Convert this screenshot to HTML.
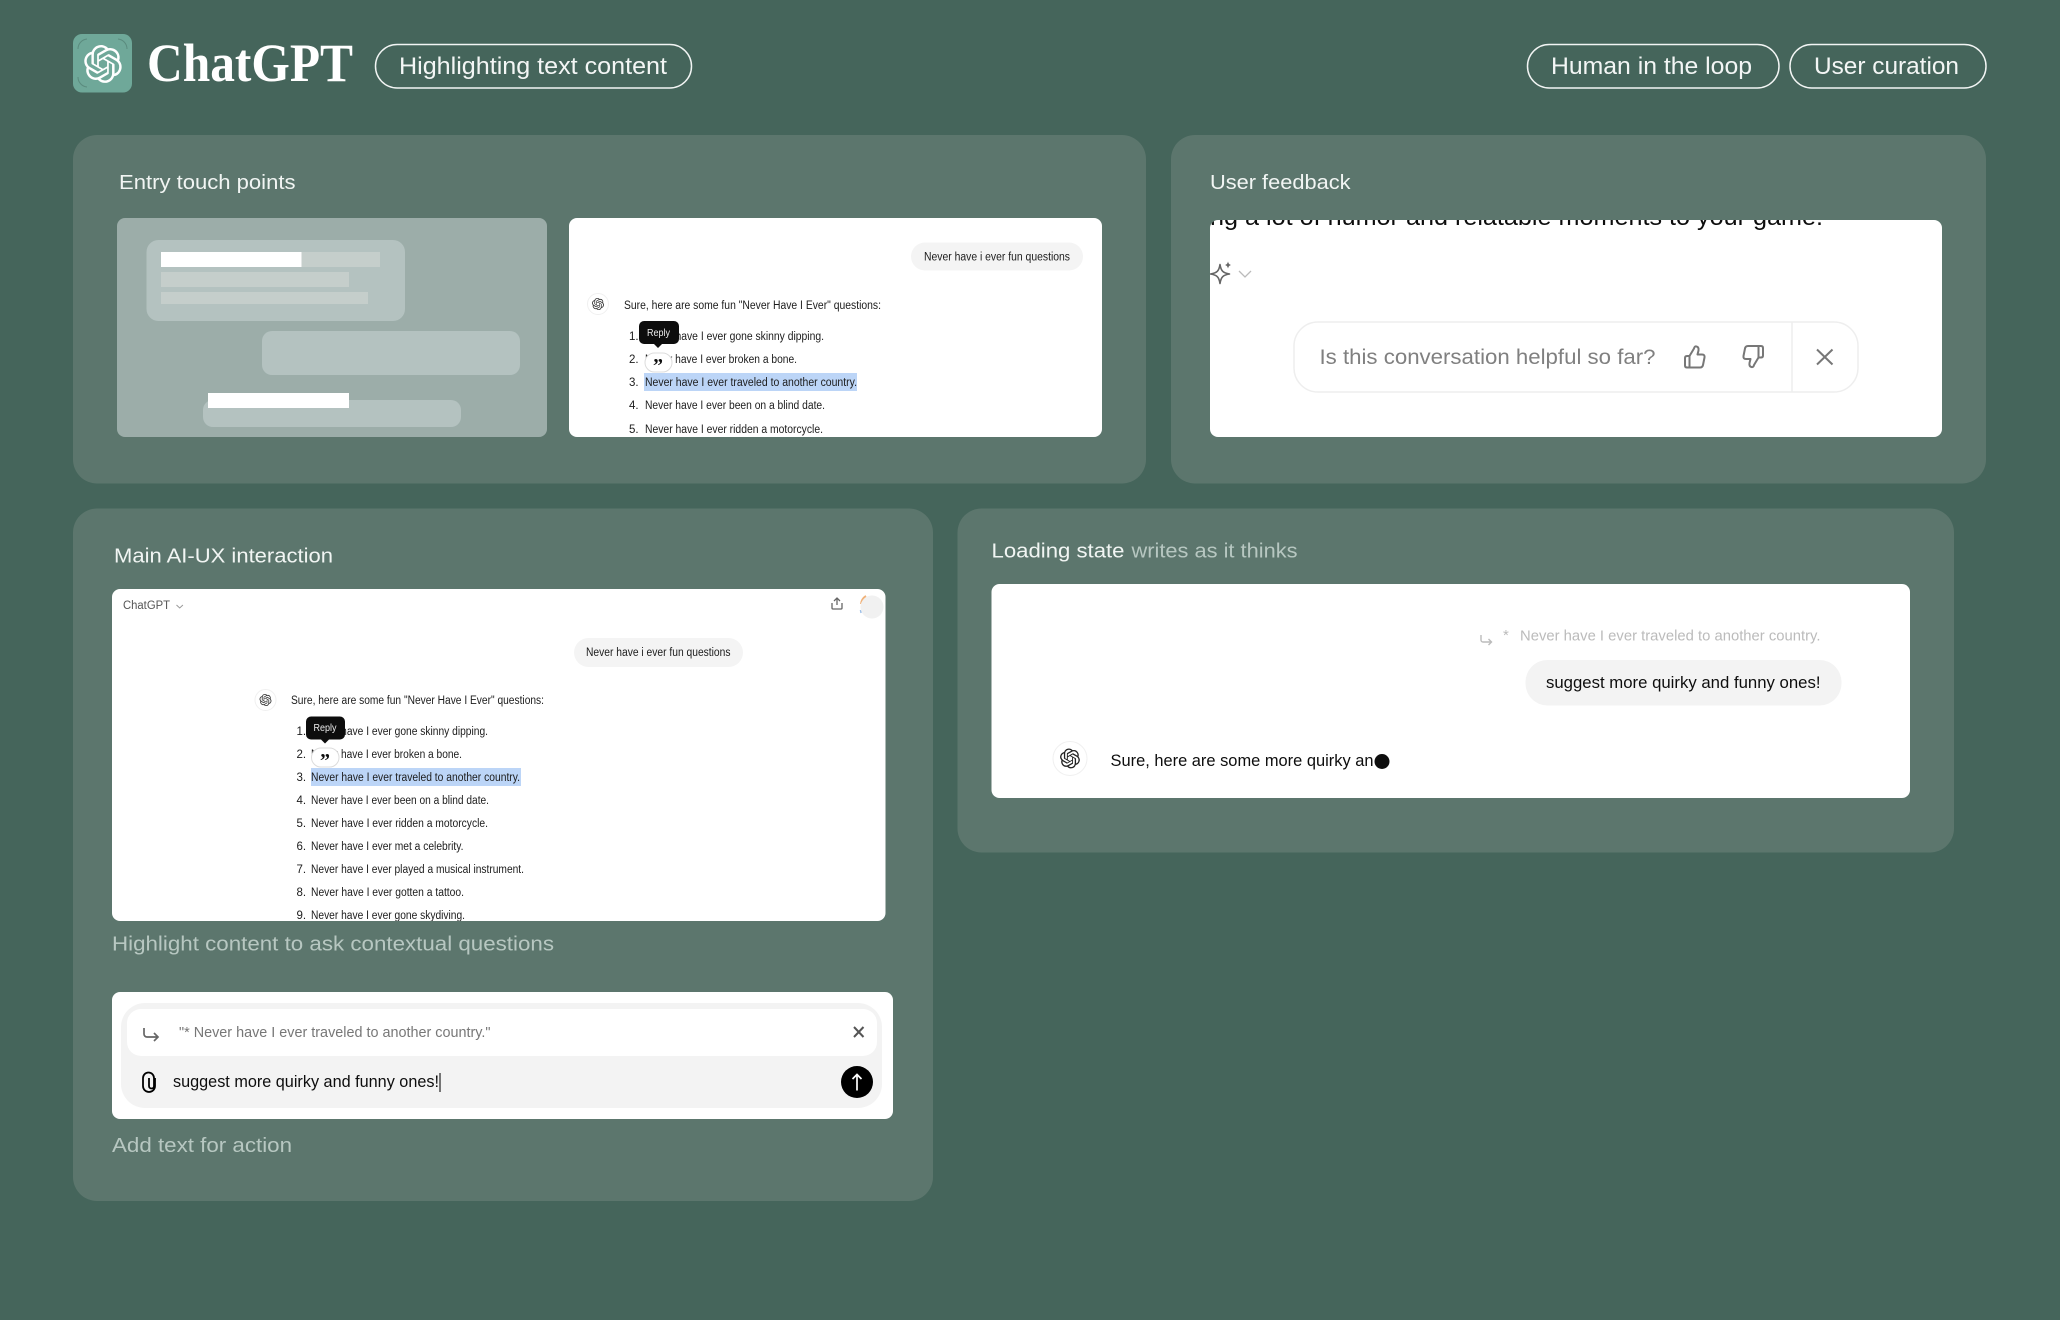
<!DOCTYPE html>
<html lang="en">
<head>
<meta charset="utf-8">
<title>ChatGPT - Highlighting text content</title>
<style>
html,body{margin:0;padding:0;background:#45655b;width:2060px;height:1320px;overflow:hidden}
svg{display:block;font-family:"Liberation Sans",sans-serif}
.t{fill:#f1f5f3;font-size:20px}
.c{fill:#b7c7c1;font-size:20px}
.p{fill:#f3f6f5;font-size:24px}
.s{fill:#1c1c1c;font-size:11.5px}
.m{fill:#1c1c1c;font-size:11.5px}
</style>
</head>
<body>
<svg width="2060" height="1320" viewBox="0 0 2060 1320" xmlns="http://www.w3.org/2000/svg">
<defs>
<filter id="b" x="-5%" y="-5%" width="110%" height="110%"><feGaussianBlur stdDeviation="0.35"/></filter>
<clipPath id="c1"><rect x="569" y="218" width="533" height="219" rx="8"/></clipPath>
<clipPath id="c2"><rect x="1210" y="220" width="732" height="217" rx="8"/></clipPath>
<clipPath id="c3"><rect x="112" y="589" width="773.5" height="332" rx="8"/></clipPath>
<path id="oai" d="M22.2819 9.8211a5.9847 5.9847 0 0 0-.5157-4.9108 6.0462 6.0462 0 0 0-6.5098-2.9A6.0651 6.0651 0 0 0 4.9807 4.1818a5.9847 5.9847 0 0 0-3.9977 2.9 6.0462 6.0462 0 0 0 .7427 7.0966 5.98 5.98 0 0 0 .511 4.9107 6.051 6.051 0 0 0 6.5146 2.9001A5.9847 5.9847 0 0 0 13.2599 24a6.0557 6.0557 0 0 0 5.7718-4.2058 5.9894 5.9894 0 0 0 3.9977-2.9001 6.0557 6.0557 0 0 0-.7475-7.0729zm-9.022 12.6081a4.4755 4.4755 0 0 1-2.8764-1.0408l.1419-.0804 4.7783-2.7582a.7948.7948 0 0 0 .3927-.6813v-6.7369l2.02 1.1686a.071.071 0 0 1 .038.052v5.5826a4.504 4.504 0 0 1-4.4945 4.4944zm-9.6607-4.1254a4.4708 4.4708 0 0 1-.5346-3.0137l.142.0852 4.783 2.7582a.7712.7712 0 0 0 .7806 0l5.8428-3.3685v2.3324a.0804.0804 0 0 1-.0332.0615L9.74 19.9502a4.4992 4.4992 0 0 1-6.1408-1.6464zM2.3408 7.8956a4.485 4.485 0 0 1 2.3655-1.9728V11.6a.7664.7664 0 0 0 .3879.6765l5.8144 3.3543-2.0201 1.1685a.0757.0757 0 0 1-.071 0l-4.8303-2.7865A4.504 4.504 0 0 1 2.3408 7.872zm16.5963 3.8558L13.1038 8.364 15.1192 7.2a.0757.0757 0 0 1 .071 0l4.8303 2.7913a4.4944 4.4944 0 0 1-.6765 8.1042v-5.6772a.79.79 0 0 0-.407-.667zm2.0107-3.0231l-.142-.0852-4.7735-2.7818a.7759.7759 0 0 0-.7854 0L9.409 9.2297V6.8974a.0662.0662 0 0 1 .0284-.0615l4.8303-2.7866a4.4992 4.4992 0 0 1 6.6802 4.66zM8.3065 12.863l-2.02-1.1638a.0804.0804 0 0 1-.038-.0567V6.0742a4.4992 4.4992 0 0 1 7.3757-3.4537l-.142.0805L8.704 5.459a.7948.7948 0 0 0-.3927.6813zm1.0976-2.3654l2.602-1.4998 2.6069 1.4998v2.9994l-2.5974 1.4997-2.6067-1.4997Z"/>
</defs>

<rect width="2060" height="1320" fill="#45655b"/>

<!-- header -->
<rect x="73" y="34" width="59" height="58.500" rx="9" fill="#6fa899"/>
<g fill="none" stroke="#5b8b7e" stroke-width="1">
<path d="M78 49a10 10 0 0 1 9-10"/><path d="M118 39a10 10 0 0 1 9 10"/><path d="M78 77a10 10 0 0 0 9 10"/>
</g>
<use href="#oai" transform="translate(84 45) scale(1.58)" fill="#fff"/>
<text x="147" y="81" font-family="'Liberation Serif',serif" font-weight="700" font-size="54" fill="#fff" textLength="206" lengthAdjust="spacingAndGlyphs">ChatGPT</text>

<g fill="none" stroke="#f2f5f4" stroke-width="1.500">
<rect x="375.500" y="44.500" width="316" height="43.500" rx="21.700"/>
<rect x="1527.500" y="44.500" width="251.500" height="43.500" rx="21.700"/>
<rect x="1790" y="44.500" width="196" height="43.500" rx="21.700"/>
</g>
<text class="p" x="399" y="74" textLength="268" lengthAdjust="spacingAndGlyphs">Highlighting text content</text>
<text class="p" x="1551" y="74" textLength="201" lengthAdjust="spacingAndGlyphs">Human in the loop</text>
<text class="p" x="1814" y="74" textLength="145" lengthAdjust="spacingAndGlyphs">User curation</text>

<!-- panels -->
<g fill="#5c766d">
<rect x="73" y="135" width="1073" height="348.500" rx="24"/>
<rect x="1171" y="135" width="815" height="348.500" rx="24"/>
<rect x="73" y="508.500" width="860" height="692.500" rx="24"/>
<rect x="957.500" y="508.500" width="996.500" height="344" rx="24"/>
</g>

<text class="t" x="119" y="189" textLength="176.500" lengthAdjust="spacingAndGlyphs">Entry touch points</text>
<text class="t" x="1210" y="189" textLength="140.500" lengthAdjust="spacingAndGlyphs">User feedback</text>
<text class="t" x="114" y="562.500" textLength="219" lengthAdjust="spacingAndGlyphs">Main AI-UX interaction</text>
<text class="t" x="991.500" y="557.500" textLength="133" lengthAdjust="spacingAndGlyphs">Loading state</text>
<text class="c" x="1131.500" y="557.500" textLength="166" lengthAdjust="spacingAndGlyphs">writes as it thinks</text>
<text class="c" x="112" y="950.500" font-size="21" textLength="442" lengthAdjust="spacingAndGlyphs">Highlight content to ask contextual questions</text>
<text class="c" x="112" y="1152" font-size="21" textLength="180" lengthAdjust="spacingAndGlyphs">Add text for action</text>

<!-- wireframe -->
<rect x="117" y="218" width="430" height="219" rx="8" fill="#9cada9"/>
<rect x="146.500" y="240" width="258.500" height="81" rx="12" fill="#b4c2c0"/>
<rect x="161" y="252" width="219" height="15" fill="#c5cecb"/>
<rect x="161" y="252" width="140.500" height="15" fill="#fff"/>
<rect x="161" y="272" width="188" height="15" fill="#c5cecb"/>
<rect x="161" y="292" width="207" height="12" fill="#c5cecb"/>
<rect x="262" y="331" width="258" height="44" rx="10" fill="#b4c2c0"/>
<rect x="203" y="400" width="258" height="27" rx="10" fill="#b4c2c0"/>
<rect x="208" y="393" width="141" height="15" fill="#fff"/>

<!-- screen 1 -->
<g clip-path="url(#c1)">
<rect x="569" y="218" width="533" height="219" fill="#fff"/>
<g filter="url(#b)">
<rect x="911" y="242.500" width="172" height="28" rx="14" fill="#f4f4f4"/>
<text class="m" x="924" y="260.500" textLength="146" lengthAdjust="spacingAndGlyphs">Never have i ever fun questions</text>
<circle cx="598" cy="304" r="10.500" fill="#fff" stroke="#f0f0f0"/>
<use href="#oai" transform="translate(592 298) scale(.5)" fill="#333"/>
<text class="s" x="624" y="309" textLength="257" lengthAdjust="spacingAndGlyphs">Sure, here are some fun "Never Have I Ever" questions:</text>
<text class="s" x="629" y="340">1.</text>
<text class="s" x="645" y="340" textLength="179" lengthAdjust="spacingAndGlyphs">Never have I ever gone skinny dipping.</text>
<text class="s" x="629" y="363">2.</text>
<text class="s" x="645" y="363" textLength="152" lengthAdjust="spacingAndGlyphs">Never have I ever broken a bone.</text>
<text class="s" x="629" y="386">3.</text>
<rect x="644" y="373" width="213" height="18" fill="#bcd5f7"/>
<text class="s" x="645" y="386" textLength="212" lengthAdjust="spacingAndGlyphs">Never have I ever traveled to another country.</text>
<text class="s" x="629" y="409">4.</text>
<text class="s" x="645" y="409" textLength="180" lengthAdjust="spacingAndGlyphs">Never have I ever been on a blind date.</text>
<text class="s" x="629" y="433">5.</text>
<text class="s" x="645" y="433" textLength="178" lengthAdjust="spacingAndGlyphs">Never have I ever ridden a motorcycle.</text>
<rect x="645" y="353" width="27" height="19" rx="9.500" fill="#fff" stroke="#dcdcdc"/>
<text x="653" y="372" font-family="'Liberation Serif',serif" font-weight="700" font-size="20" fill="#111">”</text>
<rect x="639" y="321" width="40" height="23" rx="5" fill="#0a0a0a"/>
<path d="M654 344h8l-4 4z" fill="#0a0a0a"/>
<text x="647" y="336" font-size="10" fill="#eee" textLength="23" lengthAdjust="spacingAndGlyphs">Reply</text>
</g>
</g>

<!-- screen 2 -->
<g clip-path="url(#c2)">
<rect x="1210" y="220" width="732" height="217" fill="#fff"/>
<g filter="url(#b)">
<text x="1210" y="225" font-size="24" fill="#111" textLength="613" lengthAdjust="spacingAndGlyphs">ng a lot of humor and relatable moments to your game.</text>
<path d="M1220 264.500C1221 271 1223 273 1229.500 274C1223 275 1221 277 1220 283.500C1219 277 1217 275 1210.500 274C1217 273 1219 271 1220 264.500Z" fill="none" stroke="#666" stroke-width="1.600" stroke-linejoin="round"/>
<path d="M1228 261.500q.6 2.900 3 3.500q-2.400.6-3 3.500q-.6-2.900-3-3.500q2.400-.6 3-3.500z" fill="#666"/>
<path d="M1239 271l6 6l6-6" fill="none" stroke="#bbb" stroke-width="1.300"/>
<rect x="1294" y="322" width="564" height="70" rx="24" fill="#fff" stroke="#eee" stroke-width="1.500"/>
<path d="M1792 322v70" stroke="#eee" stroke-width="1.500"/>
<text x="1319.500" y="364" font-size="21.500" fill="#808080" textLength="336" lengthAdjust="spacingAndGlyphs">Is this conversation helpful so far?</text>
<g transform="translate(1684 345.500)" fill="none" stroke="#777" stroke-width="2" stroke-linejoin="round">
<path d="M5.500 10.500L10 3Q10.500 .5 12.500 1Q15 1.500 14.500 5L13.500 9H18Q21 9 20.500 12L19 19.500Q18.500 22 16 22H3Q1 22 1 20V12.500Q1 10.500 3 10.500H5.500V22"/>
</g>
<g transform="translate(1764 368) rotate(180)" fill="none" stroke="#777" stroke-width="2" stroke-linejoin="round">
<path d="M5.500 10.500L10 3Q10.500 .5 12.500 1Q15 1.500 14.500 5L13.500 9H18Q21 9 20.500 12L19 19.500Q18.500 22 16 22H3Q1 22 1 20V12.500Q1 10.500 3 10.500H5.500V22"/>
</g>
<path d="M1817 349.500l15.500 15M1832.500 349.500l-15.500 15" stroke="#777" stroke-width="2" fill="none"/>
</g>
</g>

<!-- screen 3 -->
<g clip-path="url(#c3)">
<rect x="112" y="589" width="773.500" height="332" fill="#fff"/>
<g filter="url(#b)">
<text x="123" y="609" font-size="11.500" fill="#555" textLength="47" lengthAdjust="spacingAndGlyphs">ChatGPT</text>
<path d="M176.500 605l3.200 3l3.200-3" fill="none" stroke="#999" stroke-width="1"/>
<path d="M837 605V598.500M834 601l3-3l3 3M832 603v5a1 1 0 0 0 1 1h8a1 1 0 0 0 1-1v-5" fill="none" stroke="#666" stroke-width="1.300"/>
<path d="M861 604a11 11 0 0 1 5-8" fill="none" stroke="#f0b27a" stroke-width="2"/>
<path d="M860.500 610l.500 3" fill="none" stroke="#9ec0e8" stroke-width="1.500"/>
<circle cx="872" cy="607" r="11.500" fill="#f1f1f1"/>
<rect x="574" y="638" width="169" height="29" rx="14.500" fill="#f4f4f4"/>
<text class="m" x="586" y="656" textLength="144.500" lengthAdjust="spacingAndGlyphs">Never have i ever fun questions</text>
<circle cx="265.500" cy="700" r="10.500" fill="#fff" stroke="#f0f0f0"/>
<use href="#oai" transform="translate(259.500 694) scale(.5)" fill="#333"/>
<text class="s" x="291" y="704" textLength="253" lengthAdjust="spacingAndGlyphs">Sure, here are some fun "Never Have I Ever" questions:</text>
<text class="s" x="296.500" y="735">1.</text>
<text class="s" x="311" y="735" textLength="177" lengthAdjust="spacingAndGlyphs">Never have I ever gone skinny dipping.</text>
<text class="s" x="296.500" y="758">2.</text>
<text class="s" x="311" y="758" textLength="151" lengthAdjust="spacingAndGlyphs">Never have I ever broken a bone.</text>
<text class="s" x="296.500" y="781">3.</text>
<rect x="311" y="768" width="210" height="18" fill="#bcd5f7"/>
<text class="s" x="311" y="781" textLength="209" lengthAdjust="spacingAndGlyphs">Never have I ever traveled to another country.</text>
<text class="s" x="296.500" y="804">4.</text>
<text class="s" x="311" y="804" textLength="178" lengthAdjust="spacingAndGlyphs">Never have I ever been on a blind date.</text>
<text class="s" x="296.500" y="827">5.</text>
<text class="s" x="311" y="827" textLength="177" lengthAdjust="spacingAndGlyphs">Never have I ever ridden a motorcycle.</text>
<text class="s" x="296.500" y="850">6.</text>
<text class="s" x="311" y="850" textLength="152.500" lengthAdjust="spacingAndGlyphs">Never have I ever met a celebrity.</text>
<text class="s" x="296.500" y="873">7.</text>
<text class="s" x="311" y="873" textLength="213" lengthAdjust="spacingAndGlyphs">Never have I ever played a musical instrument.</text>
<text class="s" x="296.500" y="896">8.</text>
<text class="s" x="311" y="896" textLength="153" lengthAdjust="spacingAndGlyphs">Never have I ever gotten a tattoo.</text>
<text class="s" x="296.500" y="919">9.</text>
<text class="s" x="311" y="919" textLength="154" lengthAdjust="spacingAndGlyphs">Never have I ever gone skydiving.</text>
<rect x="311.500" y="748" width="27.500" height="19" rx="9.500" fill="#fff" stroke="#dcdcdc"/>
<text x="320" y="767" font-family="'Liberation Serif',serif" font-weight="700" font-size="20" fill="#111">”</text>
<rect x="306" y="716.500" width="39" height="23" rx="5" fill="#0a0a0a"/>
<path d="M321 739.500h8l-4 4z" fill="#0a0a0a"/>
<text x="313.500" y="731" font-size="10" fill="#eee" textLength="23" lengthAdjust="spacingAndGlyphs">Reply</text>
</g>
</g>

<!-- input -->
<rect x="112" y="992" width="781" height="127" rx="8" fill="#fff"/>
<g filter="url(#b)">
<rect x="121" y="1003" width="761" height="105" rx="24" fill="#f3f3f3"/>
<rect x="127" y="1009" width="750" height="47" rx="14" fill="#fff"/>
<path d="M144 1028v6a3 3 0 0 0 3 3h11M154 1033l4 4l-4 4" fill="none" stroke="#666" stroke-width="1.700"/>
<text x="179" y="1037" font-size="15" fill="#777" textLength="311.500" lengthAdjust="spacingAndGlyphs">"* Never have I ever traveled to another country."</text>
<path d="M854 1027l9.500 10M863.500 1027l-9.500 10" stroke="#555" stroke-width="2" fill="none"/>
<path d="M149 1078V1086a2.500 2.500 0 0 0 5 0V1078a5.500 5.500 0 0 0-11 0V1086a6 6 0 0 0 12 0V1078" fill="none" stroke="#000" stroke-width="1.800"/>
<text x="173" y="1087" font-size="17" fill="#111" textLength="266" lengthAdjust="spacingAndGlyphs">suggest more quirky and funny ones!</text>
<path d="M440 1073v19" stroke="#222" stroke-width="1.200"/>
<circle cx="857" cy="1082" r="16" fill="#000"/>
<path d="M857 1090.500v-16M852.500 1079l4.500-4.500l4.500 4.500" fill="none" stroke="#fff" stroke-width="1.700"/>
</g>

<!-- loading screen -->
<rect x="991.500" y="584" width="918.500" height="214" rx="8" fill="#fff"/>
<g filter="url(#b)">
<path d="M1481 635v5a2 2 0 0 0 2 2h8.500M1488.500 639l3 3l-3 3" fill="none" stroke="#bbb" stroke-width="1.400"/>
<text x="1503" y="640" font-size="15" fill="#bbb">*</text>
<text x="1520" y="640.500" font-size="15" fill="#bbb" textLength="300.500" lengthAdjust="spacingAndGlyphs">Never have I ever traveled to another country.</text>
<rect x="1525.500" y="660" width="316" height="45.500" rx="22" fill="#f3f3f3"/>
<text x="1546" y="688" font-size="17" fill="#111" textLength="274.500" lengthAdjust="spacingAndGlyphs">suggest more quirky and funny ones!</text>
<circle cx="1070" cy="758.500" r="17" fill="#fff" stroke="#f0f0f0"/>
<use href="#oai" transform="translate(1060 748.500) scale(.83)" fill="#222"/>
<text x="1110.500" y="766" font-size="17" fill="#111" textLength="263" lengthAdjust="spacingAndGlyphs">Sure, here are some more quirky an</text>
<circle cx="1382" cy="761.500" r="7.500" fill="#111"/>
</g>
</svg>
</body>
</html>
